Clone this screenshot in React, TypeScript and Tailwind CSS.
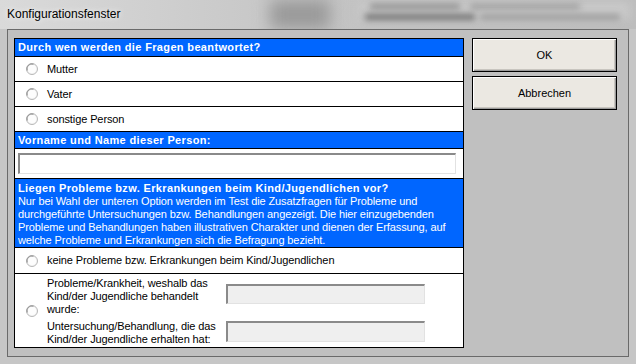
import React from 'react';

const font = { fontFamily: '"Liberation Sans", Arial, sans-serif' };

function Radio() {
  return (
    <svg width="12" height="12" viewBox="0 0 12 12" className="shrink-0">
      <circle cx="6" cy="6" r="5.5" fill="#f4f4f4" stroke="#b8b8b8" />
      <path d="M1.2 7.5 A5 5 0 0 1 7.5 1.2" fill="none" stroke="#8c8c8c" strokeWidth="1" />
      <circle cx="6" cy="6" r="4" fill="#fdfdfd" />
    </svg>
  );
}

function Header({ children, tall }: { children: React.ReactNode; tall?: boolean }) {
  return (
    <div
      className={`bg-[#0066ff] text-white font-bold text-[11px] leading-[13px] tracking-[0.35px] pl-[3px] flex items-center border-b border-black ${
        tall ? 'h-[18px]' : 'h-[17px]'
      }`}
    >
      {children}
    </div>
  );
}

function OptionRow({ label, tall }: { label: string; tall?: boolean }) {
  return (
    <div
      className={`flex items-center pl-[11px] gap-[9px] bg-white text-[11px] tracking-[-0.1px] text-black border-b border-black ${
        tall ? 'h-[26px]' : 'h-[25px]'
      }`}
    >
      <Radio />
      <span>{label}</span>
    </div>
  );
}

function Field({ disabled }: { disabled?: boolean }) {
  return (
    <div
      className={`border-t-2 border-l-2 border-t-[#8a8a8a] border-l-[#8a8a8a] border-b border-r border-b-[#e2e2e2] border-r-[#e2e2e2] ${
        disabled ? 'bg-[#efefef]' : 'bg-white'
      }`}
    />
  );
}

export default function App() {
  return (
    <div className="w-[636px] h-[364px] bg-[#c6c6c6] flex flex-col overflow-hidden" style={font}>
      {/* title bar */}
      <div className="relative h-[29px] bg-gradient-to-r from-[#dadada] via-[#c4c4c4] to-[#bdbdbd] flex items-center pl-[7px] overflow-hidden">
        <div className="absolute left-[270px] top-0 w-[60px] h-[29px] bg-[#9a9a9a] blur-[8px]" />
        <div className="absolute left-[360px] top-[2px] w-[270px] h-[18px] bg-[#c9c9c9] blur-[4px]" />
        <div className="absolute left-[370px] top-[4px] w-[90px] h-[5px] bg-[#8a8a8a] blur-[3px]" />
        <div className="absolute left-[470px] top-[4px] w-[110px] h-[5px] bg-[#9a9a9a] blur-[3px]" />
        <div className="absolute left-[365px] top-[14px] w-[110px] h-[6px] bg-[#707070] blur-[3px]" />
        <div className="absolute left-[480px] top-[14px] w-[140px] h-[6px] bg-[#9c9c9c] blur-[3px]" />
        <span className="relative text-[12px] text-black mt-[-2px]" style={{ textShadow: '0 0 6px #fff' }}>
          Konfigurationsfenster
        </span>
      </div>

      {/* client */}
      <div className="flex-1 px-[7px] pb-[7px] flex">
        <div className="flex-1 border border-[#6a6a6a] bg-[#c0c0c0] flex pl-[6px] pt-[8px] gap-[8px]">
          <div className="w-[450px] h-[310px] border border-black bg-white flex flex-col">
            <Header tall>Durch wen werden die Fragen beantwortet?</Header>
            <OptionRow label="Mutter" />
            <OptionRow label="Vater" />
            <OptionRow label="sonstige Person" />
            <Header>Vorname und Name dieser Person:</Header>
            <div className="h-[30px] border-b border-black pt-[4px] pl-[3px] pr-[7px] flex">
              <div className="w-[438px] h-[21px] flex flex-col [&>div]:flex-1">
                <Field />
              </div>
            </div>
            <div className="bg-[#0066ff] text-white text-[11px] leading-[13px] tracking-[-0.1px] pl-[3px] pt-[3px] h-[69px] border-b border-black whitespace-nowrap">
              <div className="font-bold tracking-[0.35px]">Liegen Probleme bzw. Erkrankungen beim Kind/Jugendlichen vor?</div>
              <div>Nur bei Wahl der unteren Option werden im Test die Zusatzfragen für Probleme und</div>
              <div>durchgeführte Untersuchungen bzw. Behandlungen angezeigt. Die hier einzugebenden</div>
              <div>Probleme und Behandlungen haben illustrativen Charakter und dienen der Erfassung, auf</div>
              <div>welche Probleme und Erkrankungen sich die Befragung bezieht.</div>
            </div>
            <OptionRow label="keine Probleme bzw. Erkrankungen beim Kind/Jugendlichen" tall />
            <div className="flex-1 flex items-center pl-[11px] gap-[9px]">
              <Radio />
              <div className="flex flex-col gap-[4px] text-[11px] leading-[13px] tracking-[-0.1px] text-black pt-[1px]">
                <div className="flex">
                  <div className="w-[179px]">
                    Probleme/Krankheit, weshalb das
                    <br />
                    Kind/der Jugendliche behandelt
                    <br />
                    wurde:
                  </div>
                  <div className="w-[199px] h-[20px] mt-[7px] flex flex-col [&>div]:flex-1">
                    <Field disabled />
                  </div>
                </div>
                <div className="flex">
                  <div className="w-[179px]">
                    Untersuchung/Behandlung, die das
                    <br />
                    Kind/der Jugendliche erhalten hat:
                  </div>
                  <div className="w-[199px] h-[21px] mt-[1px] flex flex-col [&>div]:flex-1">
                    <Field disabled />
                  </div>
                </div>
              </div>
            </div>
          </div>

          <div className="flex flex-col gap-[4px]">
            <button className="w-[145px] h-[34px] border border-black bg-[#ebe8e2] text-[11px] text-black shadow-[inset_1px_1px_0_#ffffff,inset_-1px_-1px_0_#9a9a9a,inset_-2px_-2px_0_#c8c5bf]">
              OK
            </button>
            <button className="w-[145px] h-[34px] border border-black bg-[#ebe8e2] text-[11px] text-black shadow-[inset_1px_1px_0_#ffffff,inset_-1px_-1px_0_#9a9a9a,inset_-2px_-2px_0_#c8c5bf]">
              Abbrechen
            </button>
          </div>
        </div>
      </div>
    </div>
  );
}
